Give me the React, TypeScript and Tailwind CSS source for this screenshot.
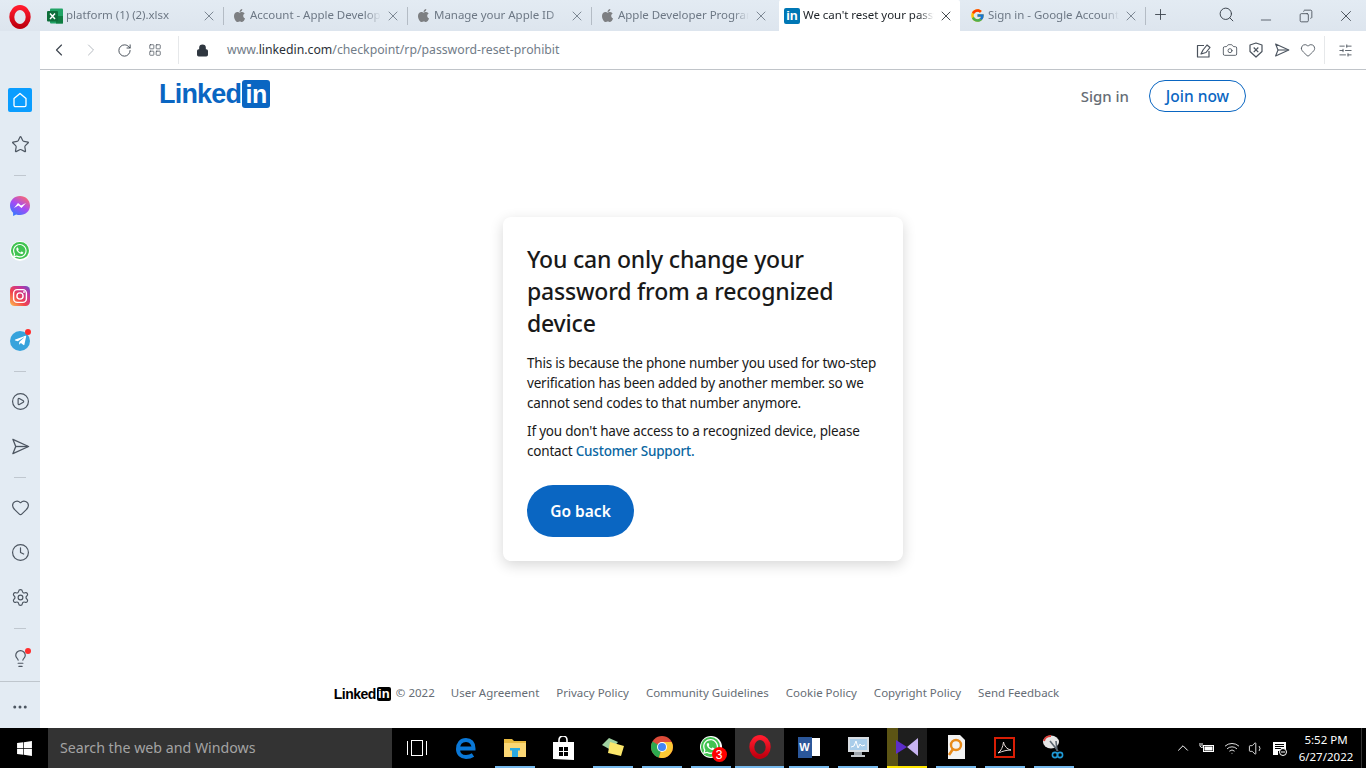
import { ReactNode } from "react";
import {
  ChevronLeft,
  ChevronRight,
  ChevronUp,
  Clock,
  Heart,
  Lock,
  Minus,
  Plus,
  RotateCw,
  Search,
  Settings,
  SlidersHorizontal,
  Star,
  X,
  Camera,
  Volume1,
  Wifi,
  Lightbulb,
  CirclePlay,
  LayoutGrid,
  Copy,
  Ellipsis,
} from "lucide-react";
import { FaApple, FaTelegramPlane, FaWhatsapp, FaWindows } from "react-icons/fa";
import { FcGoogle } from "react-icons/fc";

const ExcelIcon = () => (
  <svg width="16" height="16" viewBox="0 0 16 16">
    <rect x="3" y="0.5" width="13" height="15" rx="1" fill="#21a366" />
    <rect x="9" y="8" width="7" height="7.5" fill="#107c41" />
    <rect x="0" y="3" width="11" height="10.5" rx="1" fill="#0e6e3a" />
    <path d="M3 5.5 L8 11 M8 5.5 L3 11" stroke="#fff" strokeWidth="1.5" />
  </svg>
);

const LinkedInFavicon = () => (
  <div className="flex h-4 w-4 items-center justify-center rounded-[2px] bg-[#0077b5] font-['Liberation_Sans'] text-[13px] font-bold text-white">
    in
  </div>
);

const AppleFavicon = () => <FaApple size={15} color="#7d7f82" />;

const tabs: { title: string; icon: ReactNode; active?: boolean; sep?: boolean }[] = [
  { title: "platform (1) (2).xlsx", icon: <ExcelIcon />, sep: true },
  { title: "Account - Apple Developer", icon: <AppleFavicon />, sep: true },
  { title: "Manage your Apple ID", icon: <AppleFavicon />, sep: true },
  { title: "Apple Developer Program", icon: <AppleFavicon /> },
  { title: "We can't reset your password", icon: <LinkedInFavicon />, active: true },
  { title: "Sign in - Google Account", icon: <FcGoogle size={15} />, sep: true },
];

const OperaLogo = ({ size = 22, id }: { size?: number; id: string }) => (
  <svg width={size} height={size} viewBox="0 0 24 24">
    <defs>
      <linearGradient id={id} x1="0" y1="0" x2="0" y2="1">
        <stop offset="0" stopColor="#ff1b2d" />
        <stop offset="1" stopColor="#c0000f" />
      </linearGradient>
    </defs>
    <ellipse cx="12" cy="12" rx="8.2" ry="9.4" fill="none" stroke={`url(#${id})`} strokeWidth="5" />
  </svg>
);

// paper plane used by the sidebar and the address bar
const PlaneIcon = ({ size = 19 }: { size?: number }) => (
  <svg width={size} height={size} viewBox="0 0 20 20" fill="none" stroke="#4d5661" strokeWidth="1.4" strokeLinejoin="round">
    <path d="M2 2.500 18.500 10 2 17.500 5 10z" />
    <path d="M5 10h13" />
  </svg>
);

const ShieldIcon = () => (
  <svg width="14" height="16" viewBox="0 0 14 16" fill="none" stroke="#4a525c" strokeWidth="1.2" strokeLinejoin="round">
    <path d="M7 1 13 3v6.500L7 15 1 9.500V3z" />
    <path d="M4.700 5.500l4.600 4.600M9.300 5.500l-4.600 4.600" />
  </svg>
);

const SnapIcon = () => (
  <svg width="16" height="16" viewBox="0 0 16 16" fill="none" stroke="#4a525c" strokeWidth="1.2" strokeLinejoin="round">
    <path d="M8 3.500H1.500V15h11.500V9" />
    <path d="M5 12l2-4 4-5 3 2.500-4 5z" />
  </svg>
);

const MessengerIcon = () => (
  <svg width="20" height="20" viewBox="0 0 20 20">
    <defs>
      <linearGradient id="msgr" x1="0.2" y1="1" x2="0.8" y2="0">
        <stop offset="0" stopColor="#2f7bff" />
        <stop offset="0.5" stopColor="#a54bf5" />
        <stop offset="1" stopColor="#ff6a6a" />
      </linearGradient>
    </defs>
    <path d="M10 0C4.400 0 0 4.100 0 9.600c0 2.900 1.200 5.400 3.100 7.100V20l3-1.600c1.200.4 2.500.7 3.900.7 5.600 0 10-4.100 10-9.500S15.600 0 10 0z" fill="url(#msgr)" />
    <path d="M4 12l4-5 3 2.500L16 7l-4.500 5-3-2.500z" fill="#fff" />
  </svg>
);

const WhatsappIcon = ({ size = 20 }: { size?: number }) => (
  <div className="flex items-center justify-center rounded-full bg-white" style={{ width: size, height: size }}>
    <div className="flex h-[88%] w-[88%] items-center justify-center rounded-full bg-[#40c351]">
      <FaWhatsapp size={size * 0.78} color="#fff" />
    </div>
  </div>
);

const InstagramIcon = () => (
  <svg width="20" height="20" viewBox="0 0 20 20">
    <defs>
      <linearGradient id="insta" x1="0" y1="1" x2="1" y2="0">
        <stop offset="0" stopColor="#fdc04f" />
        <stop offset="0.4" stopColor="#f1434c" />
        <stop offset="0.75" stopColor="#c0339f" />
        <stop offset="1" stopColor="#5d55cc" />
      </linearGradient>
    </defs>
    <rect width="20" height="20" rx="4.500" fill="url(#insta)" />
    <rect x="3.600" y="3.600" width="12.800" height="12.800" rx="3.600" fill="none" stroke="#fff" strokeWidth="1.400" />
    <circle cx="10" cy="10" r="3.100" fill="none" stroke="#fff" strokeWidth="1.400" />
    <circle cx="14" cy="6" r="0.900" fill="#fff" />
  </svg>
);

const RedDot = ({ className }: { className: string }) => (
  <span className={`absolute h-[6px] w-[6px] rounded-full bg-[#ff2d2d] ${className}`} />
);

const SideRow = ({ children }: { children: ReactNode }) => (
  <div className="flex h-[45px] shrink-0 items-center justify-center">{children}</div>
);

const SideDivider = () => (
  <div className="flex h-4 shrink-0 items-center justify-center">
    <div className="h-px w-3 bg-[#c0c7cf]" />
  </div>
);

const Sidebar = () => {
  const line = { size: 19, color: "#4d5661", strokeWidth: 1.5 };
  return (
    <aside className="flex w-10 shrink-0 flex-col bg-[#e3ebf3] pt-[46px]">
      <SideRow>
        <div className="flex h-6 w-6 items-center justify-center rounded-[2px] bg-[#0a9dff]">
          <svg width="16" height="16" viewBox="0 0 16 16" fill="none" stroke="#fff" strokeWidth="1.300">
            <path d="M2 6.600 8 1.400l6 5.200v6.600a1.400 1.400 0 0 1-1.400 1.400H3.400A1.400 1.400 0 0 1 2 13.200z" strokeLinejoin="round" />
          </svg>
        </div>
      </SideRow>
      <SideRow><Star {...line} /></SideRow>
      <SideDivider />
      <SideRow><MessengerIcon /></SideRow>
      <SideRow><WhatsappIcon /></SideRow>
      <SideRow><InstagramIcon /></SideRow>
      <SideRow>
        <div className="relative flex h-5 w-5 items-center justify-center rounded-full bg-[#37a3dc]">
          <FaTelegramPlane size={13} color="#fff" />
          <RedDot className="-right-[1px] -top-[2px]" />
        </div>
      </SideRow>
      <SideDivider />
      <SideRow><CirclePlay {...line} /></SideRow>
      <SideRow><PlaneIcon /></SideRow>
      <SideDivider />
      <SideRow><Heart {...line} /></SideRow>
      <SideRow><Clock {...line} /></SideRow>
      <SideRow><Settings {...line} /></SideRow>
      <SideDivider />
      <SideRow>
        <div className="relative">
          <Lightbulb {...line} />
          <RedDot className="-right-[1px] -top-[1px]" />
        </div>
      </SideRow>
      <div className="flex flex-1 items-center justify-center border-t border-[#bfc6cd] pt-[3px]">
        <Ellipsis size={18} color="#4d5661" />
      </div>
    </aside>
  );
};

const TabStrip = () => (
  <div className="flex h-[31px] shrink-0 items-stretch bg-gradient-to-b from-[#e3ebf3] to-[#dde5ee]">
    <div className="flex w-10 shrink-0 items-center justify-center pt-[2px]">
      <OperaLogo size={24} id="operaTop" />
    </div>
    {tabs.map((tab, i) => (
      <div
        key={i}
        className={
          tab.active
            ? "ml-[3px] mr-[2px] flex w-[181px] shrink-0 items-center rounded-t-[2px] bg-white px-[5px] text-[#1c2126]"
            : "flex w-[184px] shrink-0 items-center pl-[7px] text-[#6d7885]"
        }
      >
        <div className="flex w-4 shrink-0 items-center justify-center">{tab.icon}</div>
        <span className="ml-[3px] w-[131px] overflow-hidden whitespace-nowrap pb-px text-[11.5px] leading-4 tracking-[-0.03px] [mask-image:linear-gradient(to_right,black_88%,transparent)]">
          {tab.title}
        </span>
        <X size={16} strokeWidth={1.3} className="ml-[4px] shrink-0" color={tab.active ? "#2a2f35" : "#6d7885"} />
        {tab.sep && <div className="ml-auto h-[18px] w-px bg-[#b4bcc5]" />}
      </div>
    ))}
    <div className="flex w-7 items-center justify-center pb-[2px] pl-[5px]">
      <Plus size={17} strokeWidth={1.3} color="#3e4650" />
    </div>
    <div className="ml-[36px] flex items-center text-[#3e4650]">
      <div className="flex w-10 justify-center pb-[2px]"><Search size={17} strokeWidth={1.4} /></div>
      <div className="flex w-10 justify-center pt-[8px]"><Minus size={16} strokeWidth={1.2} /></div>
      <div className="flex w-10 justify-center"><Copy size={14} strokeWidth={1.4} className="-scale-x-100" /></div>
      <div className="flex w-10 justify-center"><X size={18} strokeWidth={1.2} /></div>
    </div>
  </div>
);

const Toolbar = () => (
  <div className="flex h-[39px] shrink-0 items-center border-b border-[#c0c4c9] bg-white pl-[3px]">
    <div className="flex w-8 justify-center"><ChevronLeft size={20} strokeWidth={1.4} color="#3e4650" /></div>
    <div className="flex w-8 justify-center"><ChevronRight size={20} strokeWidth={1.2} color="#b5bac0" /></div>
    <div className="ml-px flex w-8 justify-center"><RotateCw size={15} strokeWidth={1.5} color="#3e4650" /></div>
    <div className="-ml-px flex w-8 justify-center"><LayoutGrid size={14} strokeWidth={1.2} color="#3e4650" /></div>
    <div className="ml-[7px] h-7 w-px bg-[#e6e8ea]" />
    <Lock size={13} strokeWidth={2.2} fill="#2f3740" color="#2f3740" className="ml-[17px]" />
    <div className="ml-[18px] whitespace-nowrap text-[12.25px] text-[#717c88]">
      www.<span className="text-[#2a3038]">linkedin.com</span>/checkpoint/rp/password-reset-prohibit
    </div>
    <div className="ml-auto flex items-center">
      <div className="flex w-[26px] justify-center"><SnapIcon /></div>
      <div className="flex w-[26px] justify-center"><Camera size={16} color="#4a525c" strokeWidth={1.3} /></div>
      <div className="flex w-[26px] justify-center"><ShieldIcon /></div>
      <div className="flex w-[26px] justify-center"><PlaneIcon size={16} /></div>
      <div className="flex w-[26px] justify-center"><Heart size={16} color="#4a525c" strokeWidth={1.3} /></div>
      <div className="ml-[3px] h-7 w-px bg-[#e6e8ea]" />
      <div className="flex w-[41px] justify-center"><SlidersHorizontal size={15} strokeWidth={1.3} color="#3e4650" /></div>
    </div>
  </div>
);

const footerLinks = ["User Agreement", "Privacy Policy", "Community Guidelines", "Cookie Policy", "Copyright Policy", "Send Feedback"];

const LinkedInPage = () => (
  <main className="flex flex-1 flex-col bg-white font-['Noto_Sans',sans-serif]">
    <header className="flex h-[147px] shrink-0 items-start pl-[119px] pr-[120px] pt-[10px]">
      <div className="flex items-center font-['Liberation_Sans',sans-serif] font-bold text-[#0a66c2]">
        <span className="text-[27px] leading-[28px] tracking-[-0.8px]">Linked</span>
        <span className="ml-[1px] flex h-7 w-7 items-center justify-center rounded-[3px] bg-[#0a66c2] text-[25px] leading-[28px] tracking-[-0.5px] text-white">in</span>
      </div>
      <div className="ml-auto flex items-center">
        <span className="text-[15px] font-medium text-[#666d75]">Sign in</span>
        <span className="ml-5 flex h-8 w-[97px] items-center justify-center rounded-full border border-[#0a66c2] pt-px text-[15.5px] font-medium text-[#0a66c2]">Join now</span>
      </div>
    </header>
    <div className="flex justify-center">
      <div className="h-[344px] w-[400px] rounded-lg bg-white px-6 pt-[26px] shadow-[0_4px_14px_rgba(0,0,0,0.16)]">
        <h1 className="text-[23px] font-medium leading-8 tracking-[-0.2px] text-[#191919]">
          You can only change your password from a recognized device
        </h1>
        <p className="mt-[14px] text-[13.5px] leading-5 tracking-[-0.2px] text-[#191919]">
          This is because the phone number you used for two-step verification has been added by another member. so we cannot send codes to that number anymore.
        </p>
        <p className="mt-2 text-[13.5px] leading-5 tracking-[-0.2px] text-[#191919]">
          If you don't have access to a recognized device, please contact <span className="font-medium text-[#0a66a2]">Customer Support.</span>
        </p>
        <div className="mt-6 flex h-[52px] w-[107px] items-center justify-center rounded-full bg-[#0a66c2] pt-px text-[15.5px] font-semibold text-white">
          Go back
        </div>
      </div>
    </div>
    <footer className="mt-auto flex h-[71px] items-start justify-center pr-[13px] pt-[28px] text-[11.5px] leading-4 text-[#666d75]">
      <div className="mt-[2px] flex items-center font-['Liberation_Sans',sans-serif] font-bold text-black">
        <span className="text-[14px] leading-[14px] tracking-[-0.5px]">Linked</span>
        <span className="ml-px flex h-[14px] w-[14px] items-end justify-center rounded-[2px] bg-black text-[13px] leading-[14px] text-white">in</span>
      </div>
      <span className="ml-[5px]">© 2022</span>
      <div className="ml-4 flex gap-[17px]">
        {footerLinks.map((link) => (
          <span key={link} className="whitespace-nowrap">{link}</span>
        ))}
      </div>
    </footer>
  </main>
);

const EdgeIcon = () => (
  <svg width="22" height="22" viewBox="0 0 22 22" fill="none" stroke="#0a78d7" strokeWidth="4">
    <path d="M4 11.500h14.500C18.500 6 15.500 3 11 3 6 3 3 7 3 12s3.500 8 8 8c2.500 0 5-.6 7-2" />
  </svg>
);

const ExplorerIcon = () => (
  <svg width="22" height="20" viewBox="0 0 22 20">
    <path d="M0 2h8l2 2h12v3H0z" fill="#e8b93f" />
    <rect y="6" width="22" height="14" fill="#fbd775" />
    <rect x="6" y="11" width="10" height="2.500" fill="#2aa9e0" />
    <rect x="8" y="13" width="6" height="7" fill="#2aa9e0" />
  </svg>
);

const StoreIcon = () => (
  <svg width="21" height="24" viewBox="0 0 21 24">
    <path d="M6 7V4a4 4 0 0 1 8 0v3" fill="none" stroke="#fff" strokeWidth="1.600" />
    <path d="M0 6h21v18l-21-1z" fill="#fff" />
    <path d="M6 11h4v4H6zM11 11h4v4h-4zM6 16h4v4H6zM11 16h4v4h-4z" fill="#000" />
  </svg>
);

const StickyIcon = () => (
  <svg width="24" height="20" viewBox="0 0 24 20">
    <path d="M1 8 8 1l9 4-7 8z" fill="#9fd0a0" />
    <path d="M9 5l14 4-3 10-13-3z" fill="#fbe66b" />
  </svg>
);

const ChromeIcon = () => (
  <svg width="22" height="22" viewBox="0 0 22 22">
    <circle cx="11" cy="11" r="11" fill="#dd4b39" />
    <path d="M11 11 1.500 5.500A11 11 0 0 0 8 21.600z" fill="#2da94f" />
    <path d="M11 6h9.600A11 11 0 0 1 8 21.600L11 11z" fill="#fcc934" />
    <circle cx="11" cy="11" r="5" fill="#fff" />
    <circle cx="11" cy="11" r="4" fill="#4285f4" />
  </svg>
);

const WordIcon = () => (
  <div className="relative flex h-[21px] w-[22px] items-center">
    <div className="absolute right-0 h-[18px] w-[12px] bg-white" />
    <div className="relative flex h-[21px] w-[14px] items-center justify-center bg-[#2b579a] font-['Liberation_Sans'] text-[11px] font-bold text-white">W</div>
  </div>
);

const MonitorIcon = () => (
  <svg width="24" height="22" viewBox="0 0 24 22">
    <rect x="2" y="1" width="21" height="15" fill="#d8dde2" />
    <rect x="4" y="3" width="17" height="11" fill="#a9cdea" />
    <path d="M5 11l3-1 2-5 2 7 2-4 2 2 3-1" stroke="#fff" strokeWidth="1" fill="none" />
    <rect x="8" y="16" width="8" height="3" fill="#9aa2aa" />
    <rect x="5" y="19" width="14" height="2" fill="#c3c8cd" />
  </svg>
);

const VsIcon = () => (
  <svg width="22" height="18" viewBox="0 0 22 18">
    <path d="M0 2v14l11-7z" fill="#5c2dc9" />
    <path d="M22 0v18L11 9z" fill="#c7b3f0" />
  </svg>
);

const SearchDocIcon = () => (
  <svg width="20" height="24" viewBox="0 0 20 24">
    <path d="M2 0h12l5 5v19H2z" fill="#f3f3f3" />
    <circle cx="10" cy="10" r="5" fill="none" stroke="#e88a1a" strokeWidth="2.400" />
    <path d="M7 14l-4 6" stroke="#e88a1a" strokeWidth="2.600" />
  </svg>
);

const AcrobatIcon = () => (
  <div className="flex h-[21px] w-[21px] items-center justify-center border-2 border-[#d81e05] bg-black">
    <svg width="15" height="15" viewBox="0 0 15 15" fill="none" stroke="#e8dcd8" strokeWidth="1">
      <path d="M1 13c3-2 5-6 5.500-11 1 4 3 7 7.500 8-4 0-8 1-13 3z" />
    </svg>
  </div>
);

const SnipIcon = () => (
  <svg width="24" height="24" viewBox="0 0 24 24">
    <ellipse cx="9" cy="7" rx="8" ry="6.500" fill="#e6e6e6" />
    <path d="M2 6a7 6 0 0 1 7-5" stroke="#d9413b" strokeWidth="2" fill="none" />
    <path d="M8 6l8 10M14 6l1 10" stroke="#5c6670" strokeWidth="1.600" />
    <circle cx="18" cy="20" r="2.600" fill="none" stroke="#1f9ad6" strokeWidth="1.600" />
    <circle cx="13" cy="20" r="2.600" fill="none" stroke="#1f9ad6" strokeWidth="1.600" />
  </svg>
);

const taskItems: { icon: ReactNode; kind?: "run" | "active" | "vs" | "none" }[] = [
  { icon: <div className="h-[16px] w-[12px] border border-white shadow-[-4px_0_0_-1px_#000,-5px_0_0_-1px_#fff,4px_0_0_-1px_#000,5px_0_0_-1px_#fff]" />, kind: "none" },
  { icon: <EdgeIcon />, kind: "none" },
  { icon: <ExplorerIcon />, kind: "run" },
  { icon: <StoreIcon />, kind: "none" },
  { icon: <StickyIcon />, kind: "run" },
  { icon: <ChromeIcon />, kind: "run" },
  {
    icon: (
      <div className="relative">
        <WhatsappIcon size={22} />
        <span className="absolute -bottom-[4px] -right-[5px] flex h-[15px] w-[15px] items-center justify-center rounded-full bg-[#f00] font-['Liberation_Sans'] text-[12px] text-white">3</span>
      </div>
    ),
    kind: "run",
  },
  { icon: <OperaLogo size={24} id="operaTask" />, kind: "active" },
  { icon: <WordIcon />, kind: "run" },
  { icon: <MonitorIcon />, kind: "run" },
  { icon: <VsIcon />, kind: "vs" },
  { icon: <SearchDocIcon />, kind: "run" },
  { icon: <AcrobatIcon />, kind: "run" },
  { icon: <SnipIcon />, kind: "run" },
];

const Taskbar = () => (
  <div className="flex h-10 shrink-0 items-stretch bg-black font-['Noto_Sans',sans-serif] text-white">
    <div className="flex w-12 items-center justify-center"><FaWindows size={17} /></div>
    <div className="flex w-[344px] items-center bg-[#333] pl-3 text-[14.2px] text-[#a3a3a3]">Search the web and Windows</div>
    {taskItems.map((item, i) => (
      <div
        key={i}
        className={
          item.kind === "active"
            ? "flex w-[49px] items-center justify-center border-b-2 border-[#76b9ed] bg-[#333]"
            : "flex w-[49px] items-center justify-center"
        }
      >
        {item.kind === "run" || item.kind === "vs" ? (
          <div
            className={
              item.kind === "vs"
                ? "flex h-full w-10 items-center justify-center border-b-2 border-[#ffe600] bg-gradient-to-r from-[#5c5414] from-[27%] to-[#1e1e1e] to-[27%]"
                : "flex h-full w-10 items-center justify-center border-b-2 border-[#76b9ed]"
            }
          >
            {item.icon}
          </div>
        ) : (
          item.icon
        )}
      </div>
    ))}
    <div className="ml-[93px] flex items-center text-white">
      <div className="flex w-[24px] justify-center"><ChevronUp size={18} strokeWidth={1.3} /></div>
      <div className="flex w-[24px] justify-center">
        <svg width="16" height="12" viewBox="0 0 16 12" fill="none" stroke="#fff" strokeWidth="1">
          <rect x="4.500" y="3.500" width="10" height="6" />
          <rect x="6" y="5" width="7" height="3" fill="#fff" />
          <path d="M1 1v3a2 2 0 0 0 3 1M3 1v3" />
        </svg>
      </div>
      <div className="flex w-[25px] justify-center"><Wifi size={16} strokeWidth={1.3} /></div>
      <div className="flex w-[24px] justify-center"><Volume1 size={17} strokeWidth={1.2} /></div>
      <div className="flex w-[24px] justify-center">
        <svg width="16" height="15" viewBox="0 0 16 15">
          <path d="M1 1h13v9H6v4H1z" fill="#fff" />
          <path d="M3 3.500h9M3 5.500h9M3 7.500h6" stroke="#000" strokeWidth="1" />
          <circle cx="11" cy="11" r="3.500" fill="#000" stroke="#fff" strokeWidth="1" />
          <path d="M9 11h4" stroke="#fff" strokeWidth="1" />
        </svg>
      </div>
      <div className="-ml-px flex w-[70px] flex-col items-center text-[11.5px] leading-[17px]">
        <span>5:52 PM</span>
        <span>6/27/2022</span>
      </div>
    </div>
    <div className="ml-auto mr-[4px] w-px bg-[#333]" />
  </div>
);

export default function App() {
  return (
    <div className="flex h-screen w-full flex-col overflow-hidden font-['Noto_Sans',sans-serif]">
      <TabStrip />
      <div className="flex min-h-0 flex-1">
        <Sidebar />
        <div className="flex min-w-0 flex-1 flex-col">
          <Toolbar />
          <LinkedInPage />
        </div>
      </div>
      <Taskbar />
    </div>
  );
}
